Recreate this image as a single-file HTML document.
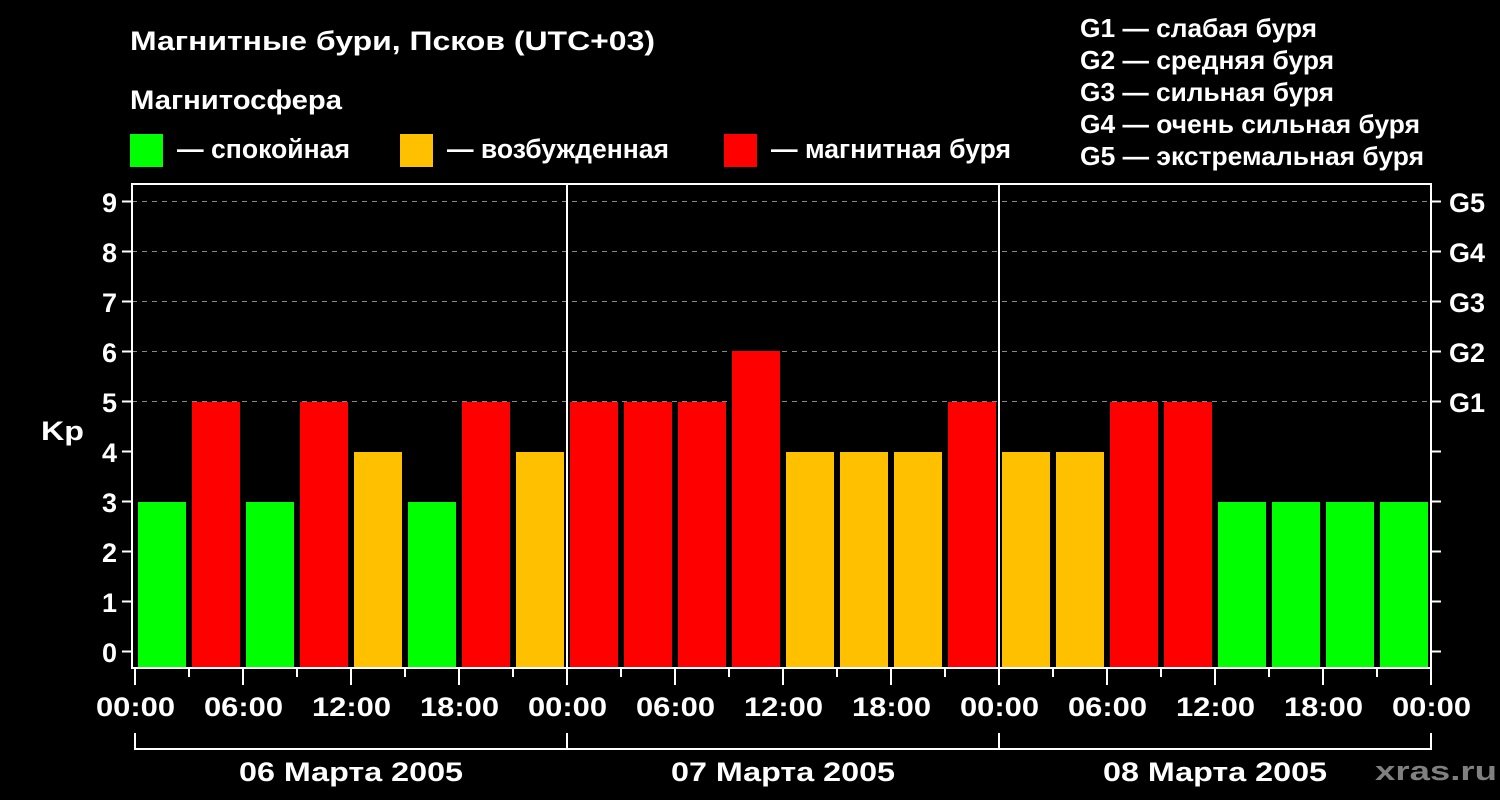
<!DOCTYPE html><html><head><meta charset="utf-8"><style>body{margin:0;background:#000}svg{display:block}text{font-family:"Liberation Sans",sans-serif;font-weight:bold;fill:#fff}</style></head><body>
<svg width="1500" height="800" xmlns="http://www.w3.org/2000/svg">
<rect width="1500" height="800" fill="#000"/>
<text x="130" y="50" font-size="27" textLength="525" lengthAdjust="spacingAndGlyphs">Магнитные бури, Псков (UTC+03)</text>
<text x="130" y="109" font-size="27" textLength="212" lengthAdjust="spacingAndGlyphs">Магнитосфера</text>
<rect x="130" y="134" width="33" height="33" fill="#00ff00"/><text x="177" y="158" font-size="27" textLength="173" lengthAdjust="spacingAndGlyphs">— спокойная</text>
<rect x="400" y="134" width="33" height="33" fill="#ffc000"/><text x="447" y="158" font-size="27" textLength="222" lengthAdjust="spacingAndGlyphs">— возбужденная</text>
<rect x="724" y="134" width="33" height="33" fill="#ff0000"/><text x="771" y="158" font-size="27" textLength="240" lengthAdjust="spacingAndGlyphs">— магнитная буря</text>
<g font-size="26">
<text x="1080" y="37" textLength="237" lengthAdjust="spacingAndGlyphs">G1 — слабая буря</text>
<text x="1080" y="69" textLength="254" lengthAdjust="spacingAndGlyphs">G2 — средняя буря</text>
<text x="1080" y="101" textLength="254" lengthAdjust="spacingAndGlyphs">G3 — сильная буря</text>
<text x="1080" y="133" textLength="340" lengthAdjust="spacingAndGlyphs">G4 — очень сильная буря</text>
<text x="1080" y="165" textLength="344" lengthAdjust="spacingAndGlyphs">G5 — экстремальная буря</text>
</g>
<g stroke="#888" stroke-dasharray="5,5" stroke-width="1">
<line x1="132" y1="201.5" x2="1431" y2="201.5"/><line x1="132" y1="251.5" x2="1431" y2="251.5"/><line x1="132" y1="301.5" x2="1431" y2="301.5"/><line x1="132" y1="351.5" x2="1431" y2="351.5"/><line x1="132" y1="401.5" x2="1431" y2="401.5"/>
</g>
<g>
<rect x="138" y="502" width="48" height="166" fill="#00ff00"/>
<rect x="192" y="402" width="48" height="266" fill="#ff0000"/>
<rect x="246" y="502" width="48" height="166" fill="#00ff00"/>
<rect x="300" y="402" width="48" height="266" fill="#ff0000"/>
<rect x="354" y="452" width="48" height="216" fill="#ffc000"/>
<rect x="408" y="502" width="48" height="166" fill="#00ff00"/>
<rect x="462" y="402" width="48" height="266" fill="#ff0000"/>
<rect x="516" y="452" width="48" height="216" fill="#ffc000"/>
<rect x="570" y="402" width="48" height="266" fill="#ff0000"/>
<rect x="624" y="402" width="48" height="266" fill="#ff0000"/>
<rect x="678" y="402" width="48" height="266" fill="#ff0000"/>
<rect x="732" y="351" width="48" height="317" fill="#ff0000"/>
<rect x="786" y="452" width="48" height="216" fill="#ffc000"/>
<rect x="840" y="452" width="48" height="216" fill="#ffc000"/>
<rect x="894" y="452" width="48" height="216" fill="#ffc000"/>
<rect x="948" y="402" width="48" height="266" fill="#ff0000"/>
<rect x="1002" y="452" width="48" height="216" fill="#ffc000"/>
<rect x="1056" y="452" width="48" height="216" fill="#ffc000"/>
<rect x="1110" y="402" width="48" height="266" fill="#ff0000"/>
<rect x="1164" y="402" width="48" height="266" fill="#ff0000"/>
<rect x="1218" y="502" width="48" height="166" fill="#00ff00"/>
<rect x="1272" y="502" width="48" height="166" fill="#00ff00"/>
<rect x="1326" y="502" width="48" height="166" fill="#00ff00"/>
<rect x="1380" y="502" width="48" height="166" fill="#00ff00"/>
</g>
<g stroke="#fff" stroke-width="2" fill="none">
<rect x="132" y="184" width="1299" height="484"/>
<line x1="567" y1="184" x2="567" y2="668"/><line x1="999" y1="184" x2="999" y2="668"/>
<path d="M135 733V749H1431V733M567 733V749M999 733V749"/>
<path d="M122 201.5H132M122 251.5H132M122 301.5H132M122 351.5H132M122 401.5H132M122 451.5H132M122 501.5H132M122 551.5H132M122 601.5H132M122 651.5H132"/>
<path d="M1431 201.5H1441M1431 251.5H1441M1431 301.5H1441M1431 351.5H1441M1431 401.5H1441M1431 451.5H1441M1431 501.5H1441M1431 551.5H1441M1431 601.5H1441M1431 651.5H1441"/>
<path d="M135 668V685M243 668V685M351 668V685M459 668V685M567 668V685M675 668V685M783 668V685M891 668V685M999 668V685M1107 668V685M1215 668V685M1323 668V685M1431 668V685"/>
<path d="M189 668V677M297 668V677M405 668V677M513 668V677M621 668V677M729 668V677M837 668V677M945 668V677M1053 668V677M1161 668V677M1269 668V677M1377 668V677"/>
</g>
<g font-size="27" text-anchor="end">
<text x="117" y="212">9</text><text x="117" y="262">8</text><text x="117" y="312">7</text><text x="117" y="362">6</text><text x="117" y="412">5</text><text x="117" y="462">4</text><text x="117" y="512">3</text><text x="117" y="562">2</text><text x="117" y="612">1</text><text x="117" y="662">0</text>
</g>
<text x="41" y="440" font-size="27" textLength="43" lengthAdjust="spacingAndGlyphs">Kp</text>
<g font-size="27"><text x="1449" y="212">G5</text><text x="1449" y="262">G4</text><text x="1449" y="312">G3</text><text x="1449" y="362">G2</text><text x="1449" y="412">G1</text></g>
<g font-size="27">
<text x="96" y="716" textLength="79" lengthAdjust="spacingAndGlyphs">00:00</text>
<text x="204" y="716" textLength="79" lengthAdjust="spacingAndGlyphs">06:00</text>
<text x="312" y="716" textLength="79" lengthAdjust="spacingAndGlyphs">12:00</text>
<text x="420" y="716" textLength="79" lengthAdjust="spacingAndGlyphs">18:00</text>
<text x="528" y="716" textLength="79" lengthAdjust="spacingAndGlyphs">00:00</text>
<text x="636" y="716" textLength="79" lengthAdjust="spacingAndGlyphs">06:00</text>
<text x="744" y="716" textLength="79" lengthAdjust="spacingAndGlyphs">12:00</text>
<text x="852" y="716" textLength="79" lengthAdjust="spacingAndGlyphs">18:00</text>
<text x="960" y="716" textLength="79" lengthAdjust="spacingAndGlyphs">00:00</text>
<text x="1068" y="716" textLength="79" lengthAdjust="spacingAndGlyphs">06:00</text>
<text x="1176" y="716" textLength="79" lengthAdjust="spacingAndGlyphs">12:00</text>
<text x="1284" y="716" textLength="79" lengthAdjust="spacingAndGlyphs">18:00</text>
<text x="1392" y="716" textLength="79" lengthAdjust="spacingAndGlyphs">00:00</text>
</g>
<g font-size="27">
<text x="239" y="781" textLength="224" lengthAdjust="spacingAndGlyphs">06 Марта 2005</text>
<text x="671" y="781" textLength="224" lengthAdjust="spacingAndGlyphs">07 Марта 2005</text>
<text x="1103" y="781" textLength="224" lengthAdjust="spacingAndGlyphs">08 Марта 2005</text>
</g>
<text x="1375" y="780" font-size="27" textLength="122" lengthAdjust="spacingAndGlyphs" style="fill:#808080">xras.ru</text>
</svg></body></html>
